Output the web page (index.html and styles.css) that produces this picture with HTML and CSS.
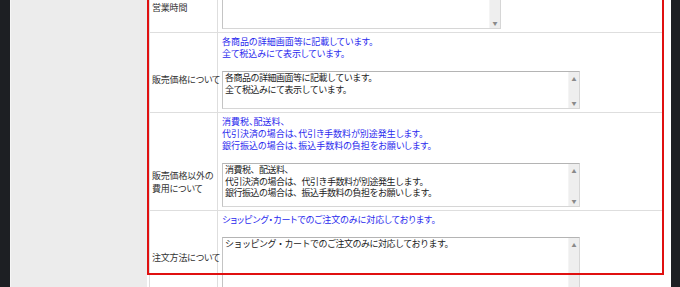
FILE: index.html
```html
<!DOCTYPE html>
<html lang="ja">
<head>
    <meta charset="UTF-8">
    <title>特定商取引法に基づく表記</title>
    <link rel="stylesheet" href="styles.css">
</head>
<body>
<div class="page">
    <div class="rail"></div>
    <div class="side"></div>

    <main class="content">
        <div class="form-wrap">
            <div class="form-table">

                <!-- 営業時間 -->
                <div class="row row-hours">
                    <div class="label">営業時間</div>
                    <div class="value">
                        <div class="textbox textbox-short">
                            <div class="textbox-text"></div>
                            <div class="scrollbar"><span class="arrow"></span><span class="arrow">&#9660;</span></div>
                        </div>
                    </div>
                </div>

                <!-- 販売価格について -->
                <div class="row row-price">
                    <div class="label">販売価格について</div>
                    <div class="value">
                        <p class="note">各商品の詳細画面等に記載しています。<br>全て税込みにて表示しています。</p>
                        <div class="textbox textbox-price">
                            <div class="textbox-text">各商品の詳細画面等に記載しています。<br>全て税込みにて表示しています。</div>
                            <div class="scrollbar"><span class="arrow">&#9650;</span><span class="arrow">&#9660;</span></div>
                        </div>
                    </div>
                </div>

                <!-- 販売価格以外の費用について -->
                <div class="row row-cost">
                    <div class="label">販売価格以外の<br>費用について</div>
                    <div class="value">
                        <p class="note">消費税、配送料、<br>代引決済の場合は、代引き手数料が別途発生します。<br>銀行振込の場合は、振込手数料の負担をお願いします。</p>
                        <div class="textbox textbox-cost">
                            <div class="textbox-text">消費税、配送料、<br>代引決済の場合は、代引き手数料が別途発生します。<br>銀行振込の場合は、振込手数料の負担をお願いします。</div>
                            <div class="scrollbar"><span class="arrow">&#9650;</span><span class="arrow">&#9660;</span></div>
                        </div>
                    </div>
                </div>

                <!-- 注文方法について -->
                <div class="row row-order">
                    <div class="label">注文方法について</div>
                    <div class="value">
                        <p class="note">ショッピング・カートでのご注文のみに対応しております。</p>
                        <div class="textbox textbox-order">
                            <div class="textbox-text">ショッピング・カートでのご注文のみに対応しております。</div>
                            <div class="scrollbar"><span class="arrow">&#9650;</span><span class="arrow"></span></div>
                        </div>
                    </div>
                </div>

            </div>

            <!-- highlighted area -->
            <div class="highlight"></div>
        </div>
    </main>

    <div class="rail rail-right"></div>
</div>
</body>
</html>
```

FILE: styles.css
```css
* {
    margin: 0;
    padding: 0;
    box-sizing: border-box;
}

:root {
    --rail: #1d1f23;
    --side: #ececec;
    --line: #dedede;
    --blue: #2a2aee;
    --label: #333333;
    --red: #e01010;
}

html, body {
    height: 100%;
    overflow: hidden;
}

body {
    font-family: "Noto Sans CJK JP", "Noto Sans", sans-serif;
    background-color: #fff;
}

.page {
    display: flex;
    height: 287px;
}

.rail {
    width: 11px;
    background-color: var(--rail);
    border-right: 1px solid #f6f6f6;
    flex-shrink: 0;
}

.rail-right {
    width: 9px;
    border-right: none;
}

.side {
    width: 136px;
    background-color: var(--side);
    flex-shrink: 0;
}

.content {
    flex: 1;
    background-color: #fff;
    overflow: hidden;
}

.form-wrap {
    position: relative;
    display: flow-root;
    height: 100%;
    padding-left: 2px;
}

.form-table {
    width: 514px;
    border-left: 1px solid var(--line);
    margin-top: -30px;
}

.row {
    display: grid;
    grid-template-columns: 68px 1fr;
    border-bottom: 1px solid var(--line);
}

.label {
    border-right: 1px solid var(--line);
    padding-left: 2px;
    font-size: 9px;
    line-height: 13px;
    color: var(--label);
    font-feature-settings: "palt";
    letter-spacing: -0.2px;
    white-space: nowrap;
}

.row-hours .label { padding-top: 31px; }
.row-price .label { padding-top: 40px; }
.row-cost .label { padding-top: 56px; }
.row-order .label { padding-top: 40px; }

.value {
    padding: 3px 0 3px 4px;
}

.note {
    font-size: 9px;
    line-height: 12px;
    color: var(--blue);
    font-feature-settings: "palt";
    margin-bottom: 11px;
    white-space: nowrap;
}

.textbox {
    display: flex;
    border: 1px solid #d6d6d6;
    border-top-color: #b4b4b4;
    border-left-color: #c4c4c4;
    background-color: #fff;
    width: 358px;
}

.textbox-short {
    width: 279px;
    height: 56px;
}

.textbox-price { height: 38px; }
.textbox-cost { height: 44px; }
.textbox-order { height: 65px; }

.textbox-text {
    flex: 1;
    padding: 0 2px;
    font-size: 9px;
    line-height: 11.5px;
    letter-spacing: -0.5px;
    color: #222;
    white-space: nowrap;
    overflow: hidden;
}

.scrollbar {
    width: 11px;
    background-color: #eeeeee;
    border-left: 1px solid #f4f4f4;
    display: flex;
    flex-direction: column;
    justify-content: space-between;
    align-items: center;
    padding: 4px 0 2px;
}

.arrow {
    font-size: 5px;
    line-height: 6px;
    height: 6px;
    color: #8a8a8a;
}

/* red frame over the edited block */
.highlight {
    position: absolute;
    left: 0;
    top: -10px;
    width: 517px;
    height: 285px;
    border: 2px solid var(--red);
    pointer-events: none;
}
```
